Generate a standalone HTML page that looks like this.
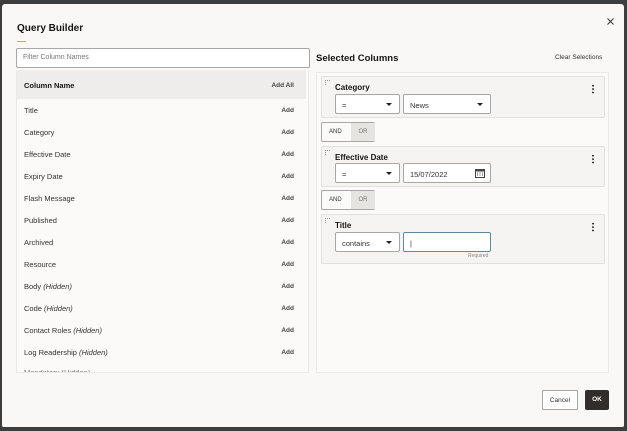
<!DOCTYPE html>
<html><head><style>
*{box-sizing:border-box;margin:0;padding:0}
body{width:627px;height:431px;background:#3d3d3d;font-family:"Liberation Sans",sans-serif;color:#161513;position:relative;overflow:hidden;font-size:8px}
.dlg{position:absolute;left:2px;top:4px;width:622px;height:424px;background:#f9f8f6;border-radius:3px}
.a{position:absolute}
.h{font-weight:bold}
.row{position:absolute;left:24px;width:270px;font-size:7.5px;color:#333;line-height:9px;height:9px}
.row span.add{position:absolute;right:0;top:0;font-size:6.5px;font-weight:bold;color:#444;line-height:9px}
.card{position:absolute;left:321px;width:284px;background:#f5f4f2;border:1px solid #e3e1de;border-radius:2px}
.sel{position:absolute;height:20px;background:#fff;border:1px solid #a9a7a3;border-radius:2px;font-size:7.5px;color:#333;padding:6px 0 0 6px}
.tri{position:absolute;right:7px;top:8px;width:0;height:0;border-left:3px solid transparent;border-right:3px solid transparent;border-top:3px solid #222}
.dots{position:absolute;right:10px;top:7px;width:2px;height:10px;background:radial-gradient(circle,#333 0.9px,transparent 1px) 0 0/2px 3.4px}
.ct{position:absolute;left:13px;top:6px;font-size:8px;font-weight:bold}
.ao{position:absolute;left:321px;width:54px;height:20px;border:1px solid #a9a7a3;border-radius:2px;font-size:6px;color:#333;background:#fafaf9}
.ao span{position:absolute;top:6px}
.ao .or{position:absolute;left:29px;top:0;width:24px;height:18px;background:#e6e4e1;color:#777;text-align:center;padding-top:6px}
</style></head><body>
<div class="dlg"></div>
<div class="a" style="left:0;top:427px;width:627px;height:4px;background:#3d3d3d"></div>
<div class="a h" style="left:17px;top:23px;font-size:10px">Query Builder</div>
<div class="a" style="left:17px;top:41px;width:9px;height:1px;background:#c9a96a"></div>
<svg class="a" style="left:607px;top:18px" width="7" height="7" viewBox="0 0 7 7"><path d="M0.5 0.5L6.5 6.5M6.5 0.5L0.5 6.5" stroke="#333" stroke-width="1"/></svg>
<div class="a" style="left:16px;top:48px;width:294px;height:20px;background:#fff;border:1px solid #a9a7a3;border-radius:2px;font-size:7px;color:#777;padding:5px 0 0 6px">Filter Column Names</div>
<div class="a" style="left:16px;top:70px;width:293px;height:303px;background:#fbfaf8;border:1px solid #eceae7;border-top:none"></div>
<div class="a" style="left:17px;top:70px;width:289px;height:29px;background:#efedeb"></div>
<div class="row h" style="top:81px;font-size:7.5px;color:#161513">Column Name<span class="add">Add All</span></div>
<div class="row" style="top:106px">Title<span class="add">Add</span></div>
<div class="row" style="top:128px">Category<span class="add">Add</span></div>
<div class="row" style="top:150px">Effective Date<span class="add">Add</span></div>
<div class="row" style="top:172px">Expiry Date<span class="add">Add</span></div>
<div class="row" style="top:194px">Flash Message<span class="add">Add</span></div>
<div class="row" style="top:216px">Published<span class="add">Add</span></div>
<div class="row" style="top:238px">Archived<span class="add">Add</span></div>
<div class="row" style="top:260px">Resource<span class="add">Add</span></div>
<div class="row" style="top:282px">Body <i>(Hidden)</i><span class="add">Add</span></div>
<div class="row" style="top:304px">Code <i>(Hidden)</i><span class="add">Add</span></div>
<div class="row" style="top:326px">Contact Roles <i>(Hidden)</i><span class="add">Add</span></div>
<div class="row" style="top:348px">Log Readership <i>(Hidden)</i><span class="add">Add</span></div>
<div class="a" style="left:17px;top:370px;width:290px;height:2px;overflow:hidden"><div style="position:relative;top:-2px;left:7px;font-size:7.5px;color:#777;line-height:9px">Mandatory (Hidden)</div></div>
<div class="a h" style="left:316px;top:53px;font-size:9.5px">Selected Columns</div>
<div class="a" style="left:555px;top:54px;font-size:6.5px;color:#333">Clear Selections</div>
<div class="a" style="left:316px;top:72px;width:293px;height:301px;background:#fbfaf8;border:1px solid #eceae7"></div>
<div class="card" style="top:76px;height:42px"><svg class="a" style="left:3px;top:3px" width="6" height="5"><g fill="#999"><rect x="0" y="0" width="1" height="1"/><rect x="2" y="0" width="1" height="1"/><rect x="4" y="0" width="1" height="1"/><rect x="0" y="2" width="1" height="1"/><rect x="0" y="4" width="1" height="1"/></g></svg><div class="ct">Category</div><div class="dots"></div>
<div class="sel" style="left:13px;top:17px;width:65px">=<div class="tri"></div></div>
<div class="sel" style="left:81px;top:17px;width:88px">News<div class="tri"></div></div></div>
<div class="ao" style="top:122px"><span style="left:7px">AND</span><div class="or">OR</div></div>
<div class="card" style="top:146px;height:41px"><svg class="a" style="left:3px;top:3px" width="6" height="5"><g fill="#999"><rect x="0" y="0" width="1" height="1"/><rect x="2" y="0" width="1" height="1"/><rect x="4" y="0" width="1" height="1"/><rect x="0" y="2" width="1" height="1"/><rect x="0" y="4" width="1" height="1"/></g></svg><div class="ct">Effective Date</div><div class="dots"></div>
<div class="sel" style="left:13px;top:16px;width:65px">=<div class="tri"></div></div>
<div class="sel" style="left:81px;top:16px;width:88px">15/07/2022
<svg style="position:absolute;right:5px;top:4px" width="10" height="10" viewBox="0 0 10 10"><rect x="0.5" y="1.5" width="9" height="8" fill="none" stroke="#444"/><rect x="0.5" y="1.5" width="9" height="2" fill="#444"/><path d="M2 5h1M4.5 5h1M7 5h1M2 7h1M4.5 7h1M7 7h1" stroke="#444"/></svg></div></div>
<div class="ao" style="top:190px"><span style="left:7px">AND</span><div class="or">OR</div></div>
<div class="card" style="top:214px;height:50px"><svg class="a" style="left:3px;top:3px" width="6" height="5"><g fill="#999"><rect x="0" y="0" width="1" height="1"/><rect x="2" y="0" width="1" height="1"/><rect x="4" y="0" width="1" height="1"/><rect x="0" y="2" width="1" height="1"/><rect x="0" y="4" width="1" height="1"/></g></svg><div class="ct">Title</div><div class="dots"></div>
<div class="sel" style="left:13px;top:17px;width:65px">contains<div class="tri"></div></div>
<div class="sel" style="left:81px;top:17px;width:88px;border-color:#5a8ca0">|</div>
<div class="a" style="left:146px;top:38px;font-size:5px;color:#888">Required</div></div>
<div class="a" style="left:542px;top:390px;width:36px;height:20px;border:1px solid #a9a7a3;border-radius:2px;background:#fff;font-size:6.5px;text-align:center;padding-top:6px;color:#333">Cancel</div>
<div class="a h" style="left:585px;top:390px;width:24px;height:20px;border-radius:2px;background:#312d2a;color:#fff;font-size:6.5px;text-align:center;padding-top:6px">OK</div>
</body></html>
